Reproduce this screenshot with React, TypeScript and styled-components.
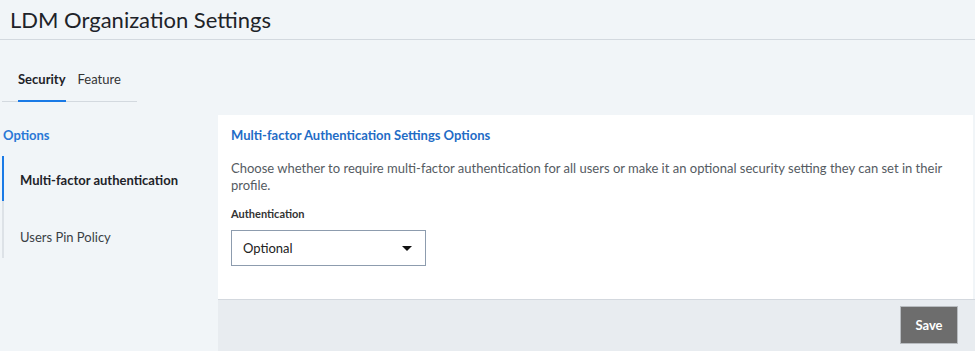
import React from 'react';
import styled, { createGlobalStyle } from 'styled-components';

const GlobalStyle = createGlobalStyle`
  html, body {
    margin: 0;
    padding: 0;
    background: #f1f5f8;
    font-family: Lato, "Open Sans", sans-serif;
    color: #222;
  }
`;

const Page = styled.div`
  width: 975px;
  height: 351px;
  overflow: hidden;
  background: #f1f5f8;
`;

const Header = styled.div`
  height: 39px;
  border-bottom: 1px solid #d3d9df;
  padding-left: 10px;
  display: flex;
  align-items: center;
`;

const Title = styled.h1`
  margin: 0;
  font-size: 22px;
  font-weight: 400;
  color: #1e2329;
`;

const TabBar = styled.div`
  margin: 26px 0 0 2px;
  width: 135px;
  display: flex;
  gap: 12px;
  padding-left: 16px;
  box-sizing: border-box;
  border-bottom: 1px solid #d3d9df;
`;

const Tab = styled.div<{ $active?: boolean }>`
  padding: 5px 0 12px;
  font-size: 13px;
  line-height: 17px;
  font-weight: ${p => (p.$active ? 700 : 400)};
  color: ${p => (p.$active ? '#1e2329' : '#333')};
  margin-bottom: -1px;
  border-bottom: 2px solid ${p => (p.$active ? '#1a7ae6' : 'transparent')};
`;

const Body = styled.div`
  display: flex;
  margin-top: 13px;
`;

const Sidebar = styled.div`
  width: 218px;
  flex: none;
`;

const SideTitle = styled.div`
  padding: 12px 0 0 3px;
  font-size: 13px;
  line-height: 16px;
  font-weight: 700;
  color: #2a78d6;
`;

const NavList = styled.div`
  margin: 13px 0 0 2px;
  width: 198px;
  border-left: 2px solid #dde2e7;
`;

const NavItem = styled.div<{ $active?: boolean }>`
  margin-left: -2px;
  margin-top: ${p => (p.$active ? 0 : 12)}px;
  padding: 16px 0 13px 16px;
  border-left: 2px solid ${p => (p.$active ? '#1a7ae6' : 'transparent')};
  font-size: 13px;
  line-height: 16px;
  font-weight: ${p => (p.$active ? 700 : 400)};
  color: ${p => (p.$active ? '#1e2329' : '#3a3f45')};
`;

const Main = styled.div`
  width: 757px;
  display: flex;
  flex-direction: column;
`;

const Card = styled.div`
  background: #fff;
  padding: 12px 20px 33px 13px;
  width: 755px;
  box-sizing: border-box;
`;

const CardTitle = styled.h2`
  margin: 0;
  font-size: 13px;
  line-height: 16px;
  font-weight: 700;
  color: #1f6cc6;
`;

const Description = styled.p`
  margin: 17px 0 0;
  font-size: 13px;
  line-height: 17px;
  color: #555b62;
`;

const Label = styled.div`
  margin-top: 13px;
  font-size: 11px;
  line-height: 14px;
  font-weight: 700;
  color: #333;
`;

const Select = styled.div`
  margin-top: 9px;
  width: 195px;
  height: 36px;
  box-sizing: border-box;
  border: 1px solid #8d9cae;
  display: flex;
  align-items: center;
  justify-content: space-between;
  padding: 0 13px 0 11px;
  font-size: 13px;
  color: #222;
`;

const Caret = styled.span`
  width: 0;
  height: 0;
  border-left: 5px solid transparent;
  border-right: 5px solid transparent;
  border-top: 5px solid #111;
`;

const Footer = styled.div`
  height: 52px;
  background: #e8ecf0;
  border-top: 1px solid #d3d8de;
  box-sizing: border-box;
  display: flex;
  justify-content: flex-end;
  align-items: flex-start;
  padding: 6px 17px 0 0;
`;

const SaveButton = styled.button`
  width: 58px;
  height: 38px;
  background: #6d6d6d;
  border: 1px solid #b8bcc0;
  color: #fff;
  font-family: Lato, sans-serif;
  font-size: 13px;
  font-weight: 700;
  cursor: pointer;
`;

const App: React.FC = () => (
  <Page>
    <GlobalStyle />
    <Header>
      <Title>LDM Organization Settings</Title>
    </Header>
    <TabBar>
      <Tab $active>Security</Tab>
      <Tab>Feature</Tab>
    </TabBar>
    <Body>
      <Sidebar>
        <SideTitle>Options</SideTitle>
        <NavList>
          <NavItem $active>Multi-factor authentication</NavItem>
          <NavItem>Users Pin Policy</NavItem>
        </NavList>
      </Sidebar>
      <Main>
        <Card>
          <CardTitle>Multi-factor Authentication Settings Options</CardTitle>
          <Description>
            Choose whether to require multi-factor authentication for all users or make it an optional security setting
            they can set in their profile.
          </Description>
          <Label>Authentication</Label>
          <Select>
            <span>Optional</span>
            <Caret />
          </Select>
        </Card>
        <Footer>
          <SaveButton>Save</SaveButton>
        </Footer>
      </Main>
    </Body>
  </Page>
);

export default App;
